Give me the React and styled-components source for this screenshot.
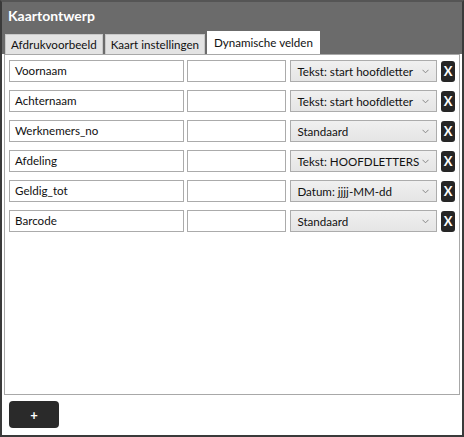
import React from "react";
import styled, { createGlobalStyle } from "styled-components";

const GlobalStyle = createGlobalStyle`
  html, body {
    margin: 0;
    padding: 0;
    background: #fff;
  }
  body {
    font-family: Lato, "Noto Sans", sans-serif;
    font-size: 11.6px;
  }
`;

const Window = styled.div`
  width: 464px;
  height: 437px;
  box-sizing: border-box;
  border: 2px solid #3a3a3a;
  border-top-color: #555;
  background: #fff;
  display: flex;
  flex-direction: column;
`;

const Header = styled.div`
  background: #6b6b6b;
  padding: 6px 0 0 2px;
  display: flex;
  flex-direction: column;
`;

const Title = styled.div`
  color: #fff;
  font-weight: 700;
  font-size: 14px;
  height: 23px;
  line-height: 16px;
  padding-left: 4px;
`;

const Tabs = styled.div`
  display: flex;
  align-items: flex-end;
  gap: 2px;
  padding-left: 1px;
`;

const Tab = styled.div`
  height: ${(p) => (p.$active ? "22px" : "19px")};
  line-height: ${(p) => (p.$active ? "22px" : "19px")};
  padding: 0 ${(p) => (p.$active ? "6px" : "5px")};
  background: ${(p) => (p.$active ? "#fff" : "#e3e3e3")};
  color: #111;
  border: 1px solid ${(p) => (p.$active ? "#fff" : "#c8c8c8")};
  border-bottom: none;
  white-space: nowrap;
`;

const Body = styled.div`
  flex: 1;
  display: flex;
  flex-direction: column;
  padding: 0 2px;
`;

const Panel = styled.div`
  flex: 1;
  border: 1px solid #a8a8a8;
  padding: 5px 4px 0 4px;
  display: flex;
  flex-direction: column;
  gap: 8px;
`;

const Row = styled.div`
  display: flex;
  align-items: center;
  height: 22px;
`;

const TextBox = styled.div`
  box-sizing: border-box;
  width: ${(p) => p.$w}px;
  height: 22px;
  border: 1px solid #ababab;
  background: #fff;
  padding: 0 5px;
  line-height: 20px;
  color: #111;
  white-space: nowrap;
  margin-right: ${(p) => p.$mr}px;
`;

const Select = styled.div`
  box-sizing: border-box;
  width: 147px;
  height: 22px;
  border: 1px solid #acacac;
  background: linear-gradient(#f0f0f0, #e5e5e5);
  padding: 0 6px;
  display: flex;
  align-items: center;
  justify-content: space-between;
  color: #111;
  white-space: nowrap;
  margin-right: 4px;
`;

const Caret = styled.svg`
  width: 7px;
  height: 5px;
  flex: none;
  margin-right: 1px;
`;

const RemoveButton = styled.div`
  width: 14px;
  height: 21px;
  border-radius: 3px;
  background: #262626;
  color: #fff;
  font-weight: 700;
  font-size: 13px;
  display: flex;
  align-items: center;
  justify-content: center;
`;

const Footer = styled.div`
  height: 40px;
  padding: 6px 0 0 5px;
  box-sizing: border-box;
`;

const AddButton = styled.div`
  width: 50px;
  height: 27px;
  border-radius: 4px;
  background: #2a2a2a;
  color: #fff;
  font-weight: 700;
  font-size: 13px;
  display: flex;
  align-items: center;
  justify-content: center;
`;

const fields = [
  ["Voornaam", "Tekst: start hoofdletter"],
  ["Achternaam", "Tekst: start hoofdletter"],
  ["Werknemers_no", "Standaard"],
  ["Afdeling", "Tekst: HOOFDLETTERS"],
  ["Geldig_tot", "Datum: jjjj-MM-dd"],
  ["Barcode", "Standaard"],
];

export default function App() {
  return (
    <>
      <GlobalStyle />
      <Window>
        <Header>
          <Title>Kaartontwerp</Title>
          <Tabs>
            <Tab>Afdrukvoorbeeld</Tab>
            <Tab>Kaart instellingen</Tab>
            <Tab $active>Dynamische velden</Tab>
          </Tabs>
        </Header>
        <Body>
          <Panel>
            {fields.map(([name, format]) => (
              <Row key={name}>
                <TextBox $w={175} $mr={3}>{name}</TextBox>
                <TextBox $w={100} $mr={4} />
                <Select>
                  <span>{format}</span>
                  <Caret viewBox="0 0 7 5">
                    <path d="M0.5 0.8 L3.5 3.8 L6.5 0.8" fill="none" stroke="#888" strokeWidth="1" />
                  </Caret>
                </Select>
                <RemoveButton>X</RemoveButton>
              </Row>
            ))}
          </Panel>
          <Footer>
            <AddButton>+</AddButton>
          </Footer>
        </Body>
      </Window>
    </>
  );
}
